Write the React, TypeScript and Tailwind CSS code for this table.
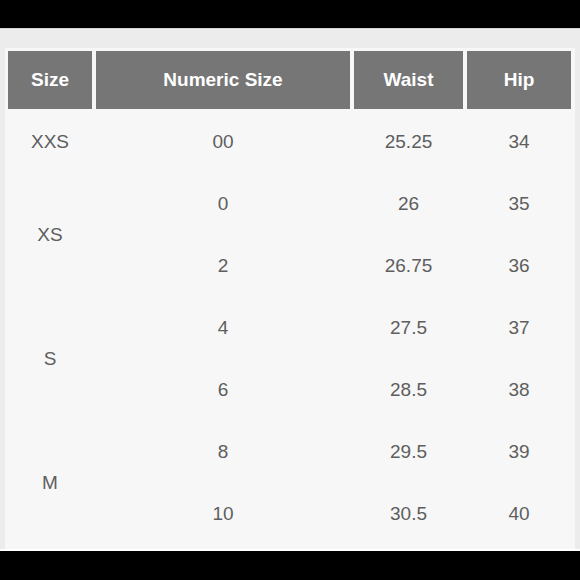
import React from 'react';

const rows = [
  { numeric: '00', waist: '25.25', hip: '34' },
  { numeric: '0', waist: '26', hip: '35' },
  { numeric: '2', waist: '26.75', hip: '36' },
  { numeric: '4', waist: '27.5', hip: '37' },
  { numeric: '6', waist: '28.5', hip: '38' },
  { numeric: '8', waist: '29.5', hip: '39' },
  { numeric: '10', waist: '30.5', hip: '40' },
];

// letter sizes, with how many numeric rows each one covers
const sizes = [
  { label: 'XXS', span: 1 },
  { label: 'XS', span: 2 },
  { label: 'S', span: 2 },
  { label: 'M', span: 2 },
];

const spanClass: Record<number, string> = {
  1: 'row-span-1',
  2: 'row-span-2',
};

const cell = 'flex items-center justify-center text-[19px] text-[#5e5e5e]';

export default function App() {
  let rowStart = 2;
  return (
    <div
      className="w-[580px] h-[580px] bg-black flex flex-col"
      style={{ fontFamily: '"Liberation Sans", Arial, sans-serif' }}
    >
      <div className="h-[28px] shrink-0" />
      <div className="flex-1 flex flex-col bg-[#ececec] border-t border-[#d6d6d6] pt-[19px] px-[5px]">
        <div className="flex-1 bg-[#f7f7f7] pt-[3px] px-[3px]">
          <div className="grid grid-cols-[84px_254px_109px_104px] grid-rows-[60px_repeat(7,62px)] gap-x-[4px]">
            {['Size', 'Numeric Size', 'Waist', 'Hip'].map((h) => (
              <div
                key={h}
                className="bg-[#767676] text-white font-bold text-[19px] flex items-center justify-center mb-[2px]"
              >
                {h}
              </div>
            ))}
            {sizes.map((s) => {
              const start = rowStart;
              rowStart += s.span;
              return (
                <div
                  key={s.label}
                  className={`col-start-1 ${spanClass[s.span]} ${cell}`}
                  style={{ gridRowStart: start }}
                >
                  {s.label}
                </div>
              );
            })}
            {rows.map((r, i) => (
              <React.Fragment key={r.numeric}>
                <div className={`col-start-2 ${cell}`} style={{ gridRowStart: i + 2 }}>
                  {r.numeric}
                </div>
                <div className={`col-start-3 ${cell}`} style={{ gridRowStart: i + 2 }}>
                  {r.waist}
                </div>
                <div className={`col-start-4 ${cell}`} style={{ gridRowStart: i + 2 }}>
                  {r.hip}
                </div>
              </React.Fragment>
            ))}
          </div>
        </div>
        <div className="h-[2px] bg-white -mx-[5px]" />
      </div>
      <div className="h-[29px] shrink-0" />
    </div>
  );
}
